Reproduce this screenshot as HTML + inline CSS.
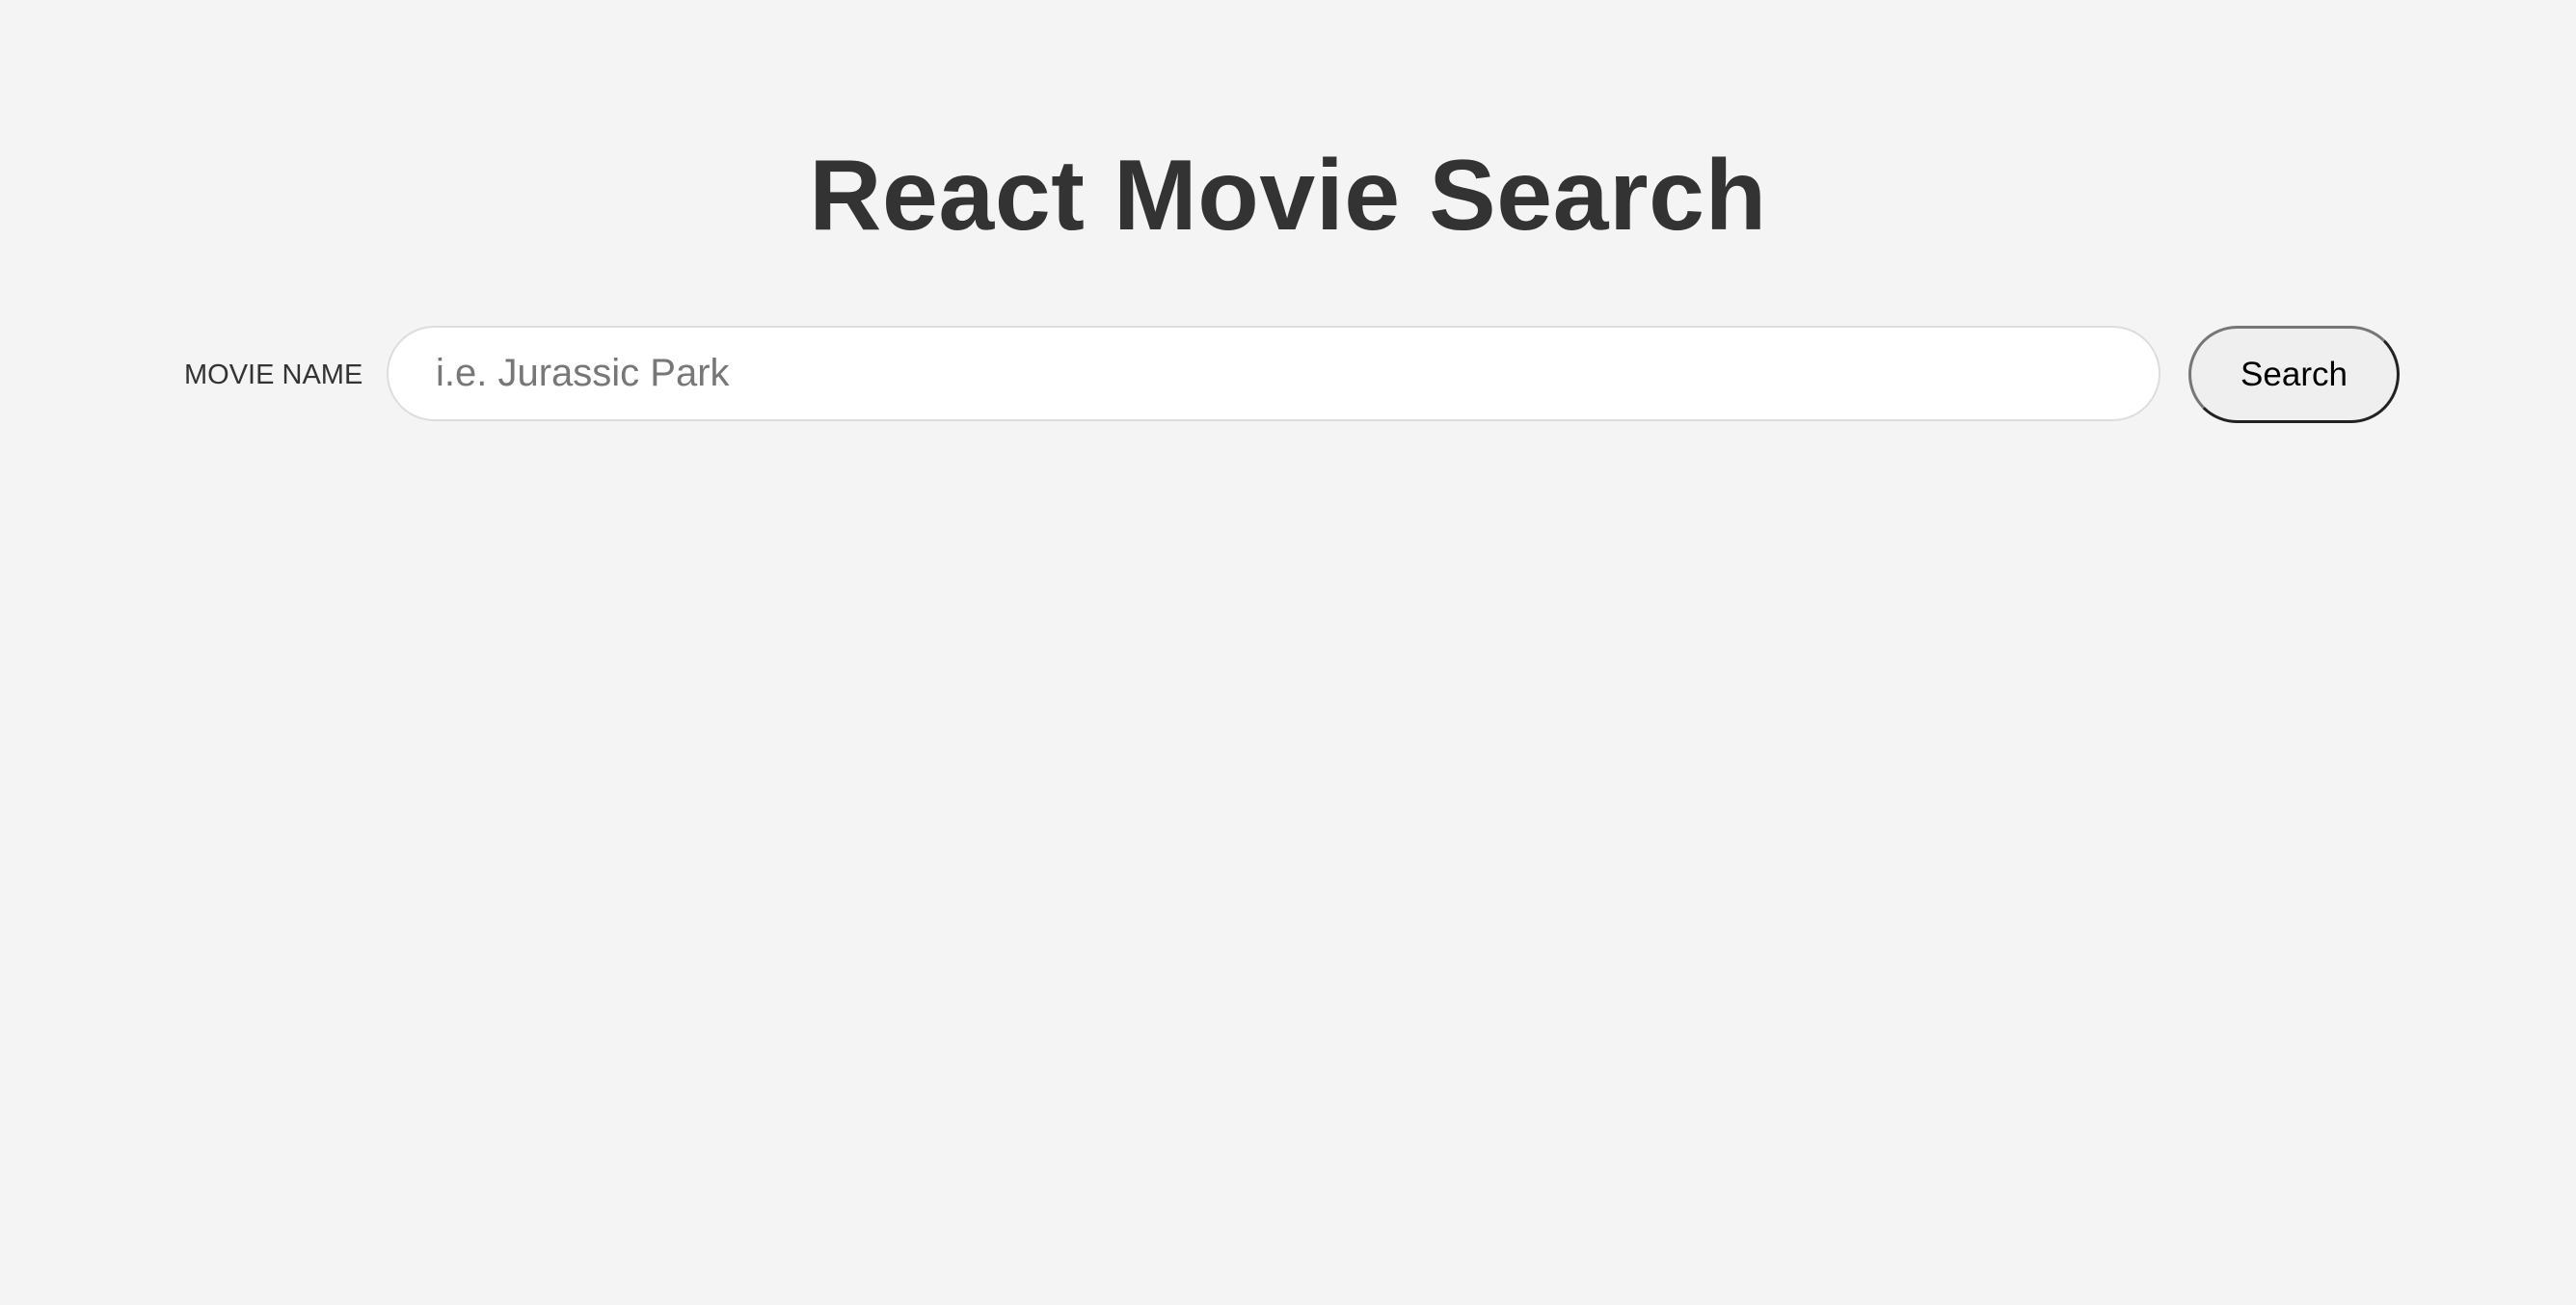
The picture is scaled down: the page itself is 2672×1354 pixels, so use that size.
<!DOCTYPE html>
<html><head><meta charset="utf-8"><style>
html,body{margin:0;padding:0;background:#f4f4f4;width:2672px;height:1354px;overflow:hidden;font-family:"Liberation Sans",Arial,sans-serif}
h1{position:absolute;left:0;width:2672px;top:138px;margin:0;text-align:center;font-size:104px;line-height:130px;font-weight:bold;color:#333;letter-spacing:0.6px}
.label{position:absolute;left:191px;top:372px;font-size:29px;color:#333;line-height:34px}
.input{position:absolute;left:401px;top:338px;width:1840px;height:99px;box-sizing:border-box;background:#fff;border:2px solid #ddd;border-radius:50px}
.ph{position:absolute;left:452px;top:365px;font-size:40px;line-height:44px;color:#777}
.btn{position:absolute;left:2270px;top:338px;width:219px;height:101px;box-sizing:border-box;background:#efefef;border:3px solid;border-color:#767676 #222 #222 #767676;border-radius:51px;text-align:center;font-size:35px;line-height:95px;color:#000}
</style></head><body>
<h1>React Movie Search</h1>
<div class="label">MOVIE NAME</div>
<div class="input"></div>
<div class="ph">i.e. Jurassic Park</div>
<div class="btn">Search</div>
</body></html>
